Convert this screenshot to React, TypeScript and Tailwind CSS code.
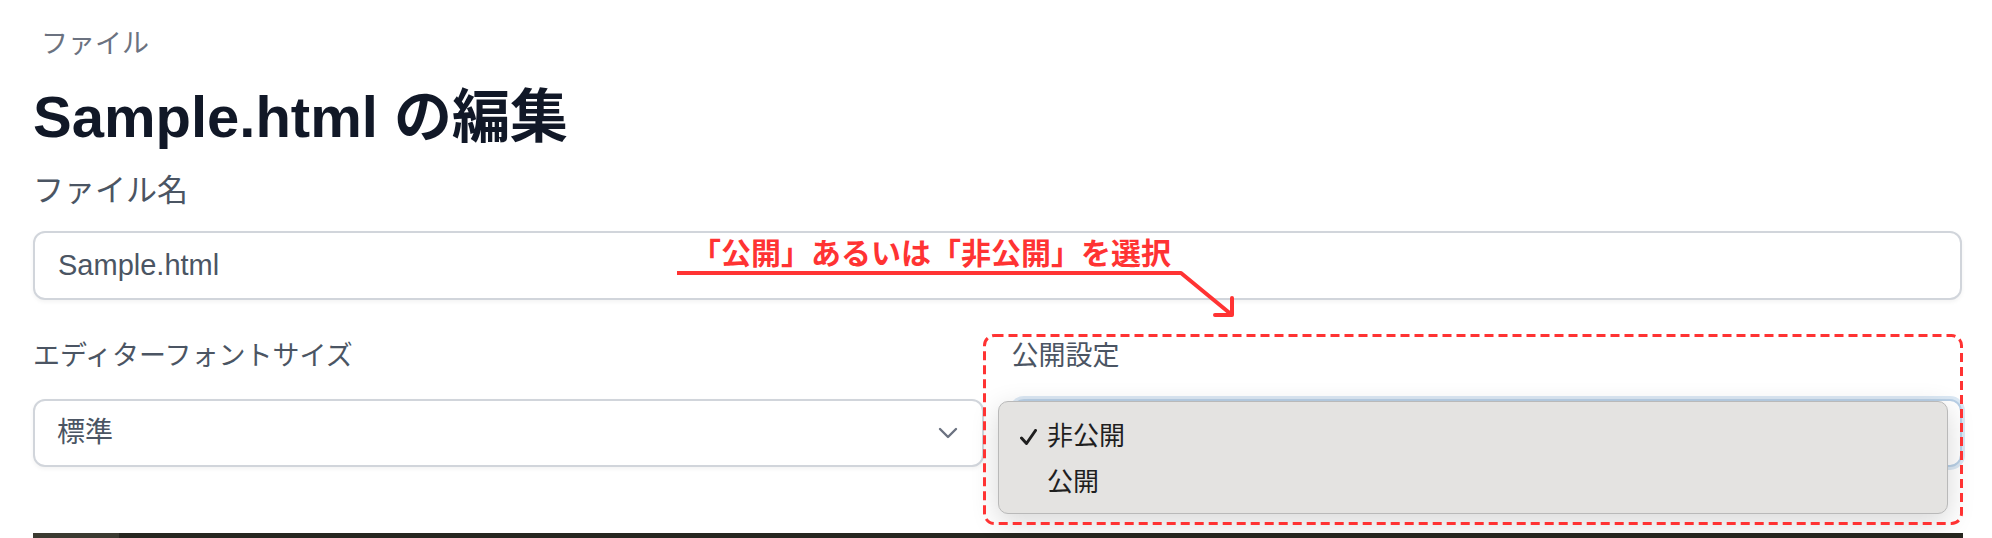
function Label({ text, big }: { text: string; big?: boolean }) {
  return (
    <div
      className={
        big
          ? 'text-[31px] leading-[48px] text-[#4b5563]'
          : 'text-[27px] leading-[40px] text-[#4b5563]'
      }
    >
      {text}
    </div>
  );
}

export default function App() {
  return (
    <div className="relative h-[538px] w-full overflow-hidden bg-white font-['Liberation_Sans','Noto_Sans_CJK_JP',sans-serif]">
      <div className="flex flex-col pl-[33px] pr-[30px] pt-[24px]">
        {/* breadcrumb */}
        <div className="pl-[8px] text-[27px] leading-[40px] text-[#6b7280]">ファイル</div>

        <h1 className="mt-[17px] text-[58px] font-bold leading-[72px] text-[#111827]">
          Sample.html の編集
        </h1>

        <div className="mt-[14px]">
          <Label text="ファイル名" big />
        </div>
        <div className="mt-[16px] flex h-[69px] items-center rounded-[12px] border-2 border-[#d1d5db] bg-white pl-[23px] text-[29px] text-[#4b5563] shadow-[0_2px_4px_rgba(0,0,0,0.05)]">
          Sample.html
        </div>

        <div className="mt-[36px] grid grid-cols-2 gap-x-[28px]">
          <div className="flex flex-col">
            <Label text="エディターフォントサイズ" />
            <div className="mt-[23px] flex h-[68px] items-center justify-between rounded-[12px] border-2 border-[#d1d5db] bg-white pl-[22px] pr-[24px] text-[28px] text-[#4b5563] shadow-[0_2px_4px_rgba(0,0,0,0.05)]">
              <span>標準</span>
              <svg width="20" height="12" viewBox="0 0 20 12">
                <polyline points="2,2 10,10 18,2" fill="none" stroke="#6b7280" strokeWidth="2.4" strokeLinecap="round" strokeLinejoin="round" />
              </svg>
            </div>
          </div>
          <div className="flex flex-col">
            <Label text="公開設定" />
            {/* focused select, covered by its open menu */}
            <div className="mt-[23px] h-[68px] rounded-[12px] border-2 border-[#b9d0e6] bg-white shadow-[0_0_0_3px_#dbe8f4]" />
          </div>
        </div>

        <div className="mt-[66px] flex h-[5px] w-[1930px]">
          <div className="w-[86px] bg-[#3b3a31]" />
          <div className="flex-1 bg-[#26261f]" />
        </div>
      </div>

      {/* open select menu */}
      <div className="absolute left-[998px] top-[401px] flex h-[113px] w-[950px] flex-col rounded-[10px] border border-[#b9b9b9] bg-[#e4e3e1] pb-[8px] pt-[12px] text-[26px] text-[#1f1f1f] shadow-[0_8px_28px_rgba(0,0,0,0.16)]">
        <div className="flex h-[47px] items-center">
          <svg width="17" height="16" viewBox="0 0 17 16" className="ml-[21px]">
            <polyline points="1.5,9 6.5,14.5 15.5,1.5" fill="none" stroke="#1f1f1f" strokeWidth="3" strokeLinecap="round" strokeLinejoin="round" />
          </svg>
          <span className="ml-[10px]">非公開</span>
        </div>
        <div className="flex h-[47px] items-center pl-[48px]">公開</div>
      </div>

      {/* annotation: dashed frame */}
      <svg className="absolute left-[980px] top-[331px]" width="986" height="197">
        <rect x="4.5" y="4.5" width="977" height="188" rx="10" fill="none" stroke="#ff3333" strokeWidth="3" strokeDasharray="9 5" />
      </svg>

      {/* annotation: label and arrow */}
      <div className="absolute left-[691px] top-[234px] text-[30px] font-bold leading-[40px] text-[#ff3333]">
        「公開」あるいは「非公開」を選択
      </div>
      <svg className="absolute left-[670px] top-[260px]" width="580" height="70">
        <polyline points="7,13 511,13 562,55" fill="none" stroke="#ff3333" strokeWidth="4" strokeLinejoin="round" />
        <polyline points="562,38 562,55 545,55" fill="none" stroke="#ff3333" strokeWidth="4" strokeLinecap="round" strokeLinejoin="round" />
      </svg>
    </div>
  );
}
